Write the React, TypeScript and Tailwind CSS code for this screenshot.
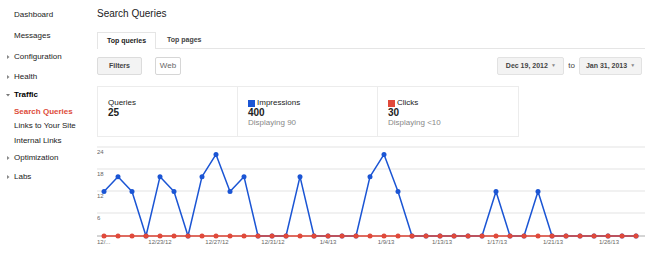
import { ReactNode } from "react";

const IMPRESSIONS = [
  12, 16, 12, 0, 16, 12, 0, 16, 22, 12, 16, 0, 0, 0, 16, 0, 0, 0, 0, 16, 22, 12, 0, 0, 0, 0, 0, 0, 12,
  0, 0, 12, 0, 0, 0, 0, 0, 0, 0,
];

const X_LABELS: [string, number, "start" | "middle"][] = [
  ["12/...", 0, "start"],
  ["12/23/12", 63, "middle"],
  ["12/27/12", 120, "middle"],
  ["12/31/12", 176, "middle"],
  ["1/4/13", 231, "middle"],
  ["1/9/13", 289, "middle"],
  ["1/13/13", 345, "middle"],
  ["1/17/13", 400, "middle"],
  ["1/21/13", 456, "middle"],
  ["1/26/13", 512, "middle"],
];

const px = (i: number) => 7 + i * 14;
const py = (v: number) => 92 - v * (89 / 24);

function Arrow({ open }: { open?: boolean }) {
  return (
    <svg width="4" height="4" viewBox="0 0 4 4" className="mr-[4px]">
      {open ? <path d="M0 1 L4 1 L2 3.5 Z" fill="#777" /> : <path d="M1 0 L3.5 2 L1 4 Z" fill="#888" />}
    </svg>
  );
}

function NavItem({
  h,
  children,
  arrow,
  open,
  className = "",
}: {
  h: string;
  children: ReactNode;
  arrow?: boolean;
  open?: boolean;
  className?: string;
}) {
  return (
    <div className={`flex items-center ${h} ${arrow ? "pl-[6px]" : "pl-[14px]"} ${className}`}>
      {arrow && <Arrow open={open} />}
      <span>{children}</span>
    </div>
  );
}

function Stat({
  label,
  value,
  sub,
  color,
  last,
}: {
  label: string;
  value: string;
  sub?: string;
  color?: string;
  last?: boolean;
}) {
  return (
    <div className={`pl-[10px] pt-[11px] ${last ? "" : "border-r border-[#ececec]"}`}>
      <div className="flex items-center h-[10px] leading-[10px] text-[8px] text-[#222]">
        {color && <span className={`w-[7px] h-[7px] mr-[2px] ${color}`} />}
        {label}
      </div>
      <div className="h-[10px] leading-[10px] text-[10px] font-bold text-[#222]">{value}</div>
      {sub && <div className="h-[10px] leading-[10px] text-[8px] text-[#888]">{sub}</div>}
    </div>
  );
}

function Chart() {
  const blue = IMPRESSIONS.map((v, i) => `${px(i)},${py(v)}`).join(" ");
  return (
    <svg width="552" height="108" viewBox="0 0 552 108" className="block">
      {[3, 25, 47, 69].map((y) => (
        <line key={y} x1="0" x2="548" y1={y} y2={y} stroke="#e3e3e3" strokeWidth="1" />
      ))}
      <line x1="0" x2="548" y1="92" y2="92" stroke="#aaa" strokeWidth="1" />
      {[
        ["24", 8],
        ["18", 30],
        ["12", 52],
        ["6", 74],
      ].map(([t, y]) => (
        <text key={t} x="0" y={Number(y) + 2} fontSize="6" fill="#666" fontFamily="Liberation Sans, Arial, sans-serif">
          {t}
        </text>
      ))}
      <polyline points={blue} fill="none" stroke="#1b55d4" strokeWidth="1.5" strokeLinejoin="round" />
      {IMPRESSIONS.map((v, i) => (
        <circle key={`b${i}`} cx={px(i)} cy={py(v)} r="2.5" fill="#1b55d4" />
      ))}
      <line x1={px(0)} x2={px(38)} y1="92" y2="92" stroke="#e0493a" strokeWidth="1.5" />
      {IMPRESSIONS.map((_, i) => (
        <circle key={`r${i}`} cx={px(i)} cy="92" r="2.5" fill="#e0493a" />
      ))}
      {X_LABELS.map(([t, x, a]) => (
        <text
          key={t}
          x={x}
          y="100"
          fontSize="6"
          fill="#666"
          textAnchor={a}
          fontFamily="Liberation Sans, Arial, sans-serif"
        >
          {t}
        </text>
      ))}
    </svg>
  );
}

export default function App() {
  return (
    <div className="flex w-[652px] h-[253px] overflow-hidden bg-white font-['Liberation_Sans',Arial,sans-serif] text-[#222]">
      <aside className="w-[97px] shrink-0 pt-[4px] text-[8px]">
        <NavItem h="h-[21px]">Dashboard</NavItem>
        <NavItem h="h-[21px]">Messages</NavItem>
        <NavItem h="h-[21px]" arrow>
          Configuration
        </NavItem>
        <NavItem h="h-[19px]" arrow>
          Health
        </NavItem>
        <NavItem h="h-[18px]" arrow open className="font-bold text-black">
          Traffic
        </NavItem>
        <NavItem h="h-[15px]" className="font-bold text-[#dd4b39]">
          Search Queries
        </NavItem>
        <NavItem h="h-[14px]">Links to Your Site</NavItem>
        <NavItem h="h-[15px]">Internal Links</NavItem>
        <NavItem h="h-[19px]" arrow>
          Optimization
        </NavItem>
        <NavItem h="h-[19px]" arrow>
          Labs
        </NavItem>
      </aside>

      <main className="w-[548px] flex flex-col">
        <h1 className="h-[28px] leading-[28px] text-[10px] text-[#222]">Search Queries</h1>

        <div className="mt-[4px] flex h-[17px] border-b border-[#e5e5e5]">
          <div className="w-[59px] h-[17px] flex items-center justify-center border border-b-0 border-[#e5e5e5] bg-white text-[7px] font-bold text-[#222]">
            Top queries
          </div>
          <div className="pl-[11px] flex items-center text-[7px] font-bold text-[#444]">Top pages</div>
        </div>

        <div className="mt-[8px] flex items-center h-[18px]">
          <button className="w-[45px] h-[18px] border border-[#dcdcdc] rounded-[2px] bg-[#f3f3f3] text-[7px] font-bold text-[#444]">
            Filters
          </button>
          <button className="ml-[13px] w-[26px] h-[18px] border border-[#d6d6d6] rounded-[2px] bg-white text-[8px] text-[#666]">
            Web
          </button>
          <button className="ml-auto w-[67px] h-[18px] flex items-center justify-center gap-[3px] border border-[#e2e2e2] rounded-[2px] bg-[#f3f3f3] text-[7px] font-bold text-[#444]">
            Dec 19, 2012 <span className="text-[5px] text-[#888]">▼</span>
          </button>
          <span className="mx-[4px] text-[8px] text-[#444]">to</span>
          <button className="w-[63px] h-[18px] mr-[3px] flex items-center justify-center gap-[3px] border border-[#e2e2e2] rounded-[2px] bg-[#f3f3f3] text-[7px] font-bold text-[#444]">
            Jan 31, 2013 <span className="text-[5px] text-[#888]">▼</span>
          </button>
        </div>

        <div className="mt-[11px] w-[422px] h-[51px] grid grid-cols-3 border border-[#ececec]">
          <Stat label="Queries" value="25" />
          <Stat label="Impressions" value="400" sub="Displaying 90" color="bg-[#1b55d4]" />
          <Stat label="Clicks" value="30" sub="Displaying <10" color="bg-[#e0493a]" last />
        </div>

        <div className="mt-[7px]">
          <Chart />
        </div>
      </main>
    </div>
  );
}
